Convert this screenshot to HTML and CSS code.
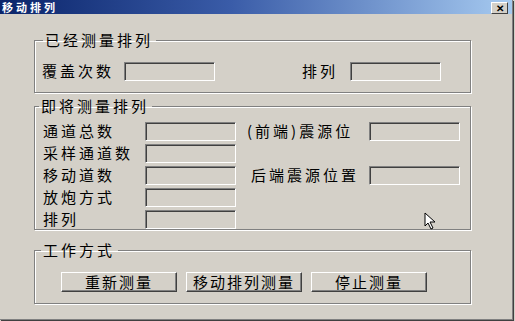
FILE: index.html
```html
<!DOCTYPE html>
<html lang="zh-CN">

<head>
    <meta charset="UTF-8">
    <title>移动排列</title>
    <link rel="stylesheet" href="styles.css">
</head>

<body>

    <div class="window">
        <div class="titlebar">
            <span class="title">移动排列</span>
            <button class="close">&#x2715;</button>
        </div>

        <div class="content">
            <fieldset class="group group-done">
                <legend>已经测量排列</legend>
                <div class="row-done">
                    <span class="label">覆盖次数</span>
                    <input class="field" disabled>
                    <span></span>
                    <span class="label">排列</span>
                    <input class="field" disabled>
                </div>
            </fieldset>

            <fieldset class="group group-next">
                <legend>即将测量排列</legend>
                <div class="grid-next">
                    <span class="label">通道总数</span>
                    <input class="field" disabled>
                    <span></span>
                    <span class="label">(前端)震源位</span>
                    <input class="field" disabled>

                    <span class="label">采样通道数</span>
                    <input class="field" disabled>
                    <span></span><span></span><span></span>

                    <span class="label">移动道数</span>
                    <input class="field" disabled>
                    <span></span>
                    <span class="label right">后端震源位置</span>
                    <input class="field" disabled>

                    <span class="label">放炮方式</span>
                    <input class="field" disabled>
                    <span></span><span></span><span></span>

                    <span class="label">排列</span>
                    <input class="field" disabled>
                    <span></span><span></span><span></span>
                </div>
            </fieldset>

            <fieldset class="group group-mode">
                <legend>工作方式</legend>
                <div class="buttons">
                    <button class="btn">重新测量</button>
                    <button class="btn">移动排列测量</button>
                    <button class="btn">停止测量</button>
                </div>
            </fieldset>
        </div>

        <!-- mouse pointer left in the screenshot -->
        <svg class="cursor" width="14" height="18" viewBox="0 0 14 18">
            <path d="M1 1 L1 14 L4 11 L7 17 L9 16 L6 10 L11 10 Z" fill="#fff" stroke="#000" stroke-width="1" />
        </svg>
    </div>

</body>

</html>
```

FILE: styles.css
```css
* {
    margin: 0;
    padding: 0;
    box-sizing: border-box;
}

body {
    background-color: #d4d0c8;
    font-family: 'Noto Sans CJK SC', 'DejaVu Sans', sans-serif;
    width: 515px;
    height: 321px;
    overflow: hidden;
}

.window {
    position: relative;
    width: 513px;
    height: 320px;
    background-color: #d4d0c8;
    border-right: 1px solid #808080;
    border-bottom: 1px solid #808080;
    box-shadow: 1px 1px 0 #404040;
}

.titlebar {
    height: 14px;
    background: linear-gradient(to right, #0a246a 0%, #3a5ca8 45%, #a6caf0 100%);
    display: flex;
    align-items: center;
    justify-content: space-between;
    padding: 0 4px 0 2px;
}

.title {
    color: #ffffff;
    font-size: 11px;
    font-weight: bold;
    line-height: 13px;
    letter-spacing: 3px;
}

.close {
    width: 17px;
    height: 12px;
    margin-top: 2px;
    background-color: #d4d0c8;
    border: 1px solid;
    border-color: #ffffff #404040 #404040 #ffffff;
    font-size: 10px;
    font-weight: bold;
    line-height: 9px;
    color: #000;
}

.content {
    padding: 19px 0 0 34px;
}

.group {
    width: 437px;
    border: 1px solid #808080;
    box-shadow: 1px 1px 0 #ffffff, inset 1px 1px 0 #ffffff;
}

.group legend {
    padding: 0 3px 0 2px;
    font-size: 15px;
    line-height: 14px;
    letter-spacing: 3px;
    color: #000;
}

.label {
    font-size: 15px;
    line-height: 16px;
    letter-spacing: 3px;
    color: #000;
    white-space: nowrap;
    align-self: start;
    padding-top: 1px;
}

.label.right {
    padding-left: 4px;
}

.field {
    height: 19px;
    background-color: #d4d0c8;
    border: 1px solid;
    border-color: #808080 #ffffff #ffffff #808080;
    box-shadow: inset 1px 1px 0 #404040;
}

.group-done {
    height: 60px;
    padding-top: 15px;
}

.group-done legend {
    margin-left: 8px;
}

.row-done {
    display: grid;
    grid-template-columns: 82px 91px 87px 48px 91px;
    margin-left: 7px;
}

.group-next {
    margin-top: 6px;
    height: 131px;
    padding-top: 9px;
}

.group-next legend {
    margin-left: 4px;
}

.grid-next {
    display: grid;
    grid-template-columns: 102px 91px 11px 122px 91px;
    grid-auto-rows: 19px;
    row-gap: 3px;
    margin-left: 8px;
}

.group-mode {
    margin-top: 13px;
    height: 61px;
    padding-top: 15px;
}

.group-mode legend {
    margin-left: 6px;
}

.buttons {
    display: flex;
    gap: 9px;
    margin-left: 26px;
}

.btn {
    width: 116px;
    height: 20px;
    background-color: #d4d0c8;
    border: 1px solid;
    border-color: #ffffff #404040 #404040 #ffffff;
    box-shadow: inset -1px -1px 0 #808080;
    font-family: 'Noto Sans CJK SC', sans-serif;
    font-size: 15px;
    line-height: 16px;
    letter-spacing: 2px;
    color: #000;
}

.cursor {
    position: absolute;
    left: 424px;
    top: 212px;
}
```
